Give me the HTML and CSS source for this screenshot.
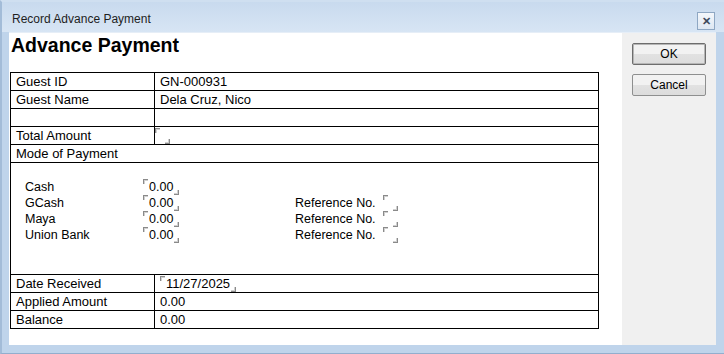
FILE: index.html
```html
<!DOCTYPE html>
<html lang="en">
<head>
    <meta charset="UTF-8">
    <title>Record Advance Payment</title>
    <link rel="stylesheet" href="styles.css">
</head>
<body>
    <div class="window">
        <!-- Title bar -->
        <div class="titlebar">
            <span class="title">Record Advance Payment</span>
            <span class="close">&#x2715;</span>
        </div>

        <div class="client">
            <!-- Report area -->
            <div class="sheet">
                <h1>Advance Payment</h1>
                <table class="grid">
                    <tr>
                        <td class="label">Guest ID</td>
                        <td>GN-000931</td>
                    </tr>
                    <tr>
                        <td class="label">Guest Name</td>
                        <td>Dela Cruz, Nico</td>
                    </tr>
                    <tr>
                        <td class="label"></td>
                        <td></td>
                    </tr>
                    <tr>
                        <td class="label">Total Amount</td>
                        <td class="tight"><span class="field empty"></span></td>
                    </tr>
                    <tr>
                        <td colspan="2">Mode of Payment</td>
                    </tr>
                    <tr>
                        <td colspan="2" class="modes">
                            <div class="mode-list">
                                <span>Cash</span>
                                <span><span class="field">0.00</span></span>
                                <span></span>
                                <span></span>

                                <span>GCash</span>
                                <span><span class="field">0.00</span></span>
                                <span>Reference No.</span>
                                <span><span class="field empty"></span></span>

                                <span>Maya</span>
                                <span><span class="field">0.00</span></span>
                                <span>Reference No.</span>
                                <span><span class="field empty"></span></span>

                                <span>Union Bank</span>
                                <span><span class="field">0.00</span></span>
                                <span>Reference No.</span>
                                <span><span class="field empty"></span></span>
                            </div>
                        </td>
                    </tr>
                    <tr>
                        <td class="label">Date Received</td>
                        <td><span class="field">11/27/2025</span></td>
                    </tr>
                    <tr>
                        <td class="label">Applied Amount</td>
                        <td>0.00</td>
                    </tr>
                    <tr>
                        <td class="label">Balance</td>
                        <td>0.00</td>
                    </tr>
                </table>
            </div>

            <!-- Buttons -->
            <div class="side">
                <button class="btn default">OK</button>
                <button class="btn">Cancel</button>
            </div>
        </div>
    </div>
</body>
</html>
```

FILE: styles.css
```css
body {
    margin: 0;
    font-family: "Liberation Sans", Arial, sans-serif;
    color: #000;
    background-color: #9fb8d4;
}
.window {
    width: 724px;
    height: 354px;
    box-sizing: border-box;
    background-color: #bfd4eb;
    border-left: 2px solid #a3bcd8;
    border-top: 2px solid #cfdff0;
    border-bottom: 1px solid #93aecd;
    display: flex;
    flex-direction: column;
}
.titlebar {
    height: 30px;
    display: flex;
    align-items: center;
    justify-content: space-between;
    padding: 0 9px 0 10px;
    background: linear-gradient(#c8daee, #d7e5f4);
}
.title {
    font-size: 12px;
    color: #1e1e1e;
    padding-top: 4px;
}
.close {
    width: 16px;
    height: 16px;
    border: 1px solid #8ea7c3;
    background: linear-gradient(#f4f7fb, #dde7f2);
    font-size: 11px;
    font-weight: bold;
    line-height: 16px;
    text-align: center;
    color: #3c4a5c;
    margin-top: 8px;
}
.client {
    display: flex;
    height: 312px;
    margin: 0 8px 0 7px;
    border-top: 1px solid #e6eef7;
}
.sheet {
    width: 613px;
    background-color: #fff;
}
h1 {
    margin: 0;
    padding: 1px 0 0 2px;
    font-size: 19.5px;
    line-height: 22px;
    font-weight: bold;
}
.grid {
    margin: 16px 0 0 1px;
    border-collapse: collapse;
    width: 589px;
    font-size: 13px;
}
.grid td {
    border: 1px solid #000;
    height: 17px;
    padding: 0 0 0 5px;
    line-height: 16px;
    vertical-align: middle;
}
.grid td.label {
    width: 138px;
}
.grid td.tight {
    padding-left: 0;
}
.grid td.modes {
    height: 95px;
    padding: 16px 0 0 14px;
    vertical-align: top;
    font-size: 12.5px;
}
.mode-list {
    display: grid;
    grid-template-columns: 118px 152px 88px auto;
    grid-auto-rows: 16px;
    align-items: center;
}
.field {
    display: inline-flex;
    align-items: center;
    vertical-align: top;
    gap: 1px;
    line-height: 14px;
    height: 16px;
}
.field::before,
.field::after {
    content: "";
    width: 4px;
    height: 4px;
    border-color: #8a8a8a;
    border-style: solid;
    border-width: 0;
}
.field::before {
    align-self: flex-start;
    border-top-width: 1px;
    border-left-width: 1px;
    box-shadow: inset 1px 1px 0 #d0d0d0;
}
.field::after {
    align-self: flex-end;
    border-bottom-width: 1px;
    border-right-width: 1px;
    box-shadow: inset -1px -1px 0 #d0d0d0;
}
.field.empty {
    gap: 5px;
}
.side {
    flex: 1;
    background-color: #f0f0f0;
    display: flex;
    flex-direction: column;
    padding: 10px 0 0 10px;
    gap: 9px;
}
.btn {
    width: 74px;
    height: 22px;
    font-family: "Liberation Sans", Arial, sans-serif;
    font-size: 12px;
    color: #000;
    border: 1px solid #8e8f8f;
    border-radius: 2px;
    background: linear-gradient(#f2f2f2 50%, #e2e2e2 50%, #dcdcdc);
    padding: 0;
}
.btn.default {
    border-color: #6d6d6d;
    box-shadow: inset 0 0 0 1px #b6b6b6;
}
```
